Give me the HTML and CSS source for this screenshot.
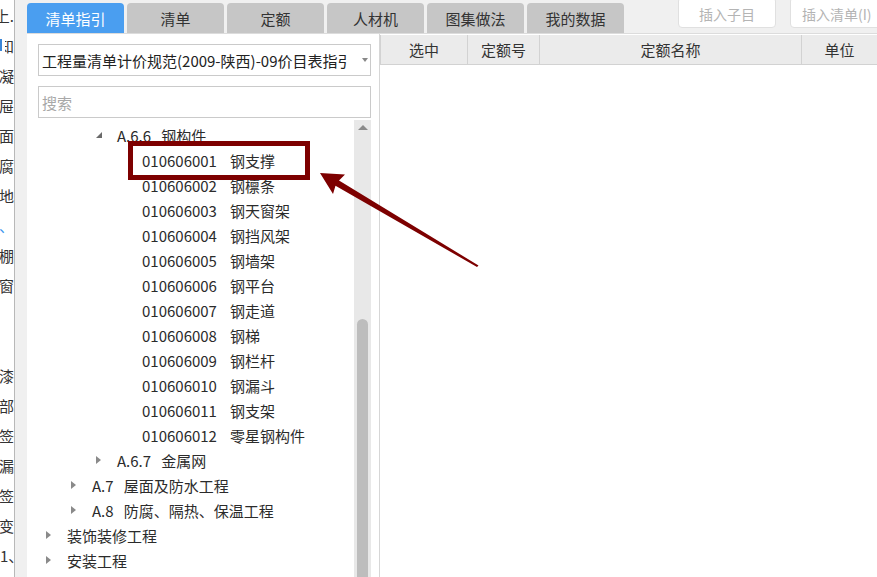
FILE: index.html
```html
<!DOCTYPE html>
<html lang="zh">
<head>
<meta charset="utf-8">
<title>清单指引</title>
<link rel="stylesheet" href="styles.css">
</head>
<body>
<div class="app">
  <div class="strip">
    <div class="sline">上.</div>
    <div class="sline"><span class="bluebar"></span><span class="half">知</span></div>
    <div class="sline">凝</div>
    <div class="sline">屉</div>
    <div class="sline">面</div>
    <div class="sline">腐</div>
    <div class="sline">地</div>
    <div class="sline blue">、</div>
    <div class="sline">棚</div>
    <div class="sline">窗</div>
    <div class="sline"></div>
    <div class="sline"></div>
    <div class="sline">漆</div>
    <div class="sline">部</div>
    <div class="sline">签</div>
    <div class="sline">漏</div>
    <div class="sline">签</div>
    <div class="sline">变</div>
    <div class="sline">1<span class="tight">、</span></div>
  </div>
  <div class="gutter"></div>
  <div class="main">
    <div class="topbar">
      <div class="tabs">
        <div class="tab active">清单指引</div>
        <div class="tab">清单</div>
        <div class="tab">定额</div>
        <div class="tab">人材机</div>
        <div class="tab">图集做法</div>
        <div class="tab">我的数据</div>
      </div>
      <div class="actions">
        <div class="btn">插入子目</div>
        <div class="btn wide">插入清单(I)</div>
      </div>
    </div>
    <div class="content">
      <div class="leftpanel">
        <div class="select">
          <div class="select-text">工程量清单计价规范(2009-陕西)-09价目表指引</div>
          <div class="select-arrow"></div>
        </div>
        <div class="search">搜索</div>
        <div class="treewrap">
          <div class="tree">
            <div class="row l3"><span class="tw open"></span><span class="lbl">A.6.6</span>钢构件</div>
            <div class="row l4"><span class="tw"></span><span class="code">010606001</span>钢支撑</div>
            <div class="row l4"><span class="tw"></span><span class="code">010606002</span>钢檩条</div>
            <div class="row l4"><span class="tw"></span><span class="code">010606003</span>钢天窗架</div>
            <div class="row l4"><span class="tw"></span><span class="code">010606004</span>钢挡风架</div>
            <div class="row l4"><span class="tw"></span><span class="code">010606005</span>钢墙架</div>
            <div class="row l4"><span class="tw"></span><span class="code">010606006</span>钢平台</div>
            <div class="row l4"><span class="tw"></span><span class="code">010606007</span>钢走道</div>
            <div class="row l4"><span class="tw"></span><span class="code">010606008</span>钢梯</div>
            <div class="row l4"><span class="tw"></span><span class="code">010606009</span>钢栏杆</div>
            <div class="row l4"><span class="tw"></span><span class="code">010606010</span>钢漏斗</div>
            <div class="row l4"><span class="tw"></span><span class="code">010606011</span>钢支架</div>
            <div class="row l4"><span class="tw"></span><span class="code">010606012</span>零星钢构件</div>
            <div class="row l3"><span class="tw closed"></span><span class="lbl">A.6.7</span>金属网</div>
            <div class="row l2"><span class="tw closed"></span><span class="lbl">A.7</span>屋面及防水工程</div>
            <div class="row l2"><span class="tw closed"></span><span class="lbl">A.8</span>防腐、隔热、保温工程</div>
            <div class="row l1"><span class="tw closed"></span>装饰装修工程</div>
            <div class="row l1"><span class="tw closed"></span>安装工程</div>
          </div>
          <div class="scrollbar">
            <div class="sb-up"></div>
            <div class="sb-space"></div>
            <div class="sb-thumb"></div>
          </div>
        </div>
      </div>
      <div class="rightpanel">
        <div class="thead">
          <div class="th c1">选中</div>
          <div class="th c2">定额号</div>
          <div class="th c3">定额名称</div>
          <div class="th c4">单位</div>
        </div>
      </div>
    </div>
  </div>
</div>
<div class="mark-box"></div>
<svg class="mark-arrow" width="877" height="577" viewBox="0 0 877 577">
  <polygon points="320,173 345,174.5 339,180.5 478.5,265.5 477,267 335.5,185.8 333,194" fill="#7d0000"/>
</svg>
</body>
</html>
```

FILE: styles.css
```css
* { box-sizing: border-box; }
html, body {
  margin: 0;
  padding: 0;
}
body {
  width: 877px;
  height: 577px;
  overflow: hidden;
  background: #f0f0f0;
  font-family: "Noto Sans CJK SC", "Noto Sans", sans-serif;
  font-size: 15px;
  color: #333;
  position: relative;
}
.app {
  display: flex;
  height: 577px;
}
.strip {
  width: 15px;
  background: #fff;
  border-right: 1px solid #b8b8b8;
  overflow: hidden;
}
.sline {
  height: 30px;
  display: flex;
  justify-content: flex-end;
  align-items: center;
  white-space: nowrap;
  font-size: 15px;
  color: #333;
}
.sline.blue { color: #3a95ee; }
.bluebar {
  display: inline-block;
  width: 2px;
  height: 12px;
  background: #3a86d8;
  margin-right: 3px;
  flex: none;
}
.half {
  display: inline-block;
  width: 9px;
  overflow: hidden;
  direction: rtl;
}
.tight {
  display: inline-block;
  width: 7px;
  overflow: hidden;
}
.gutter {
  width: 12px;
  background: #f0f0f0;
}
.main {
  flex: 1;
  display: flex;
  flex-direction: column;
  min-width: 0;
}
.topbar {
  height: 34px;
  display: flex;
  align-items: flex-start;
  background: #f0f0f0;
  border-bottom: 1px solid #dcdcdc;
}
.tabs {
  display: flex;
  gap: 3px;
  margin-top: 3px;
}
.tab {
  width: 97px;
  height: 30px;
  background: #c6c6c6;
  border-radius: 4px 4px 0 0;
  display: flex;
  align-items: center;
  justify-content: center;
  color: #333;
  font-size: 15px;
}
.tab.active {
  background: #4a9ef0;
  color: #fff;
}
.actions {
  display: flex;
  gap: 14px;
  margin-left: 54px;
  margin-top: -3px;
}
.btn {
  width: 98px;
  height: 31px;
  padding-top: 3px;
  background: #fff;
  border: 1px solid #e0e0e0;
  border-radius: 4px;
  color: #b4b4b4;
  font-size: 14px;
  display: flex;
  align-items: center;
  justify-content: center;
}
.btn.wide {
  width: 100px;
  justify-content: flex-start;
  padding-left: 11px;
  white-space: nowrap;
}
.content {
  flex: 1;
  display: flex;
  background: #fff;
  min-height: 0;
}
.leftpanel {
  width: 353px;
  padding: 10px 8px 0 11px;
  border-right: 1px solid #d6d6d6;
  display: flex;
  flex-direction: column;
}
.select {
  height: 32px;
  border: 1px solid #cacaca;
  display: flex;
  align-items: center;
  padding-left: 3px;
}
.select-text {
  width: 306px;
  overflow: hidden;
  white-space: nowrap;
  color: #222;
}
.select-arrow {
  margin-left: 14px;
  width: 0;
  height: 0;
  border-left: 3.5px solid transparent;
  border-right: 3.5px solid transparent;
  border-top: 4px solid #888;
}
.search {
  margin-top: 10px;
  height: 32px;
  border: 1px solid #cacaca;
  display: flex;
  align-items: center;
  padding-left: 3px;
  color: #a8a8a8;
}
.treewrap {
  flex: 1;
  margin-top: 2px;
  display: flex;
  min-height: 0;
}
.tree {
  flex: 1;
  padding-top: 3px;
  overflow: hidden;
}
.row {
  height: 25px;
  display: flex;
  align-items: center;
  white-space: nowrap;
  color: #2b2b2b;
}
.row.l1 { padding-left: 0; }
.row.l2 { padding-left: 25px; }
.row.l3 { padding-left: 50px; }
.row.l4 { padding-left: 75px; }
.tw {
  width: 20px;
  height: 25px;
  margin-right: 9px;
  flex: none;
  position: relative;
}
.tw.closed::before {
  content: "";
  position: absolute;
  left: 8px;
  top: 8px;
  border-top: 4px solid transparent;
  border-bottom: 4px solid transparent;
  border-left: 5px solid #8a8a8a;
}
.tw.open::before {
  content: "";
  position: absolute;
  left: 8px;
  top: 9px;
  border-left: 6px solid transparent;
  border-bottom: 6px solid #6a6a6a;
}
.lbl { margin-right: 10px; }
.code {
  display: inline-block;
  width: 88px;
}
.scrollbar {
  width: 17px;
  background: #e8e8e8;
  display: flex;
  flex-direction: column;
  align-items: center;
}
.sb-up {
  margin-top: 5px;
  width: 0;
  height: 0;
  border-left: 5px solid transparent;
  border-right: 5px solid transparent;
  border-bottom: 5px solid #8a8a8a;
}
.sb-space { height: 189px; }
.sb-thumb {
  width: 11px;
  flex: 1;
  background: #bdbdbd;
  border-radius: 6px 6px 0 0;
}
.rightpanel {
  flex: 1;
  padding-top: 1px;
}
.thead {
  display: flex;
  height: 30px;
  background: #ebebeb;
  border-bottom: 1px solid #d2d2d2;
  border-left: 1px solid #d2d2d2;
}
.th {
  display: flex;
  align-items: center;
  justify-content: center;
  border-right: 1px solid #d2d2d2;
  color: #333;
  font-size: 15px;
}
.c1 { width: 87px; }
.c2 { width: 72px; }
.c3 { width: 262px; }
.c4 { flex: 1; border-right: none; }
.mark-box {
  position: absolute;
  left: 128px;
  top: 141px;
  width: 182px;
  height: 39px;
  border: 5px solid #7d0000;
}
.mark-arrow {
  position: absolute;
  left: 0;
  top: 0;
  pointer-events: none;
}
```
